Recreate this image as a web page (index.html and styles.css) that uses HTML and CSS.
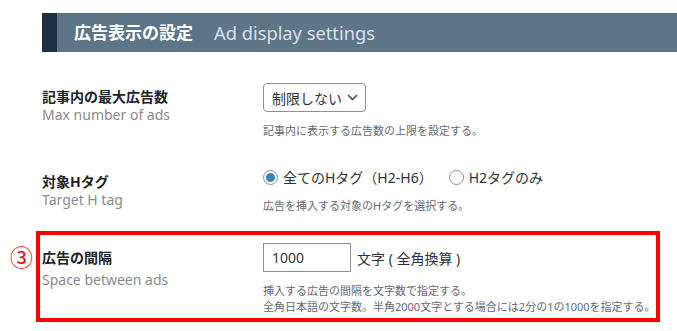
FILE: index.html
```html
<!DOCTYPE html>
<html lang="ja">
<head>
<meta charset="utf-8">
<link rel="stylesheet" href="styles.css">
</head>
<body>
<div class="page">
  <div class="header">
    <span class="h-jp">広告表示の設定</span>
    <span class="h-en">Ad display settings</span>
  </div>

  <div class="row row1">
    <div class="label">
      <div class="jp">記事内の最大広告数</div>
      <div class="en">Max number of ads</div>
    </div>
    <div class="control">
      <div class="select">
        <span>制限しない</span>
        <svg class="chev" width="11" height="7" viewBox="0 0 11 7"><polyline points="1,1 5.5,5.5 10,1" fill="none" stroke="#50575e" stroke-width="1.7"/></svg>
      </div>
      <p class="desc">記事内に表示する広告数の上限を設定する。</p>
    </div>
  </div>

  <div class="row row2">
    <div class="label">
      <div class="jp">対象Hタグ</div>
      <div class="en">Target H tag</div>
    </div>
    <div class="control">
      <div class="radios">
        <span class="radio-item"><span class="radio checked"></span>全てのHタグ（H2-H6）</span>
        <span class="radio-item"><span class="radio"></span>H2タグのみ</span>
      </div>
      <p class="desc desc2">広告を挿入する対象のHタグを選択する。</p>
    </div>
  </div>

  <div class="row row3">
    <span class="badge">③</span>
    <div class="label">
      <div class="jp">広告の間隔</div>
      <div class="en en3">Space between ads</div>
    </div>
    <div class="control">
      <div class="input-line">
        <div class="input">1000</div>
        <span class="unit">文字 ( 全角換算 )</span>
      </div>
      <p class="desc">挿入する広告の間隔を文字数で指定する。<br>全角日本語の文字数。半角2000文字とする場合には2分の1の1000を指定する。</p>
    </div>
  </div>
</div>
</body>
</html>
```

FILE: styles.css
```css
* { box-sizing: border-box; }
html, body { margin: 0; padding: 0; background: #fff; }
body {
  font-family: "Noto Sans", "Noto Sans CJK JP", sans-serif;
  color: #1d2327;
  width: 677px;
  height: 331px;
  overflow: hidden;
}
.page {
  padding-top: 13px;
  padding-left: 42px;
}
.header {
  height: 39px;
  background: #5e7587;
  border-left: 15px solid #1e3044;
  padding-left: 17px;
  display: flex;
  align-items: center;
  line-height: 22px;
}
.h-jp {
  font-size: 17px;
  color: #fff;
  font-weight: 700;
}
.h-en {
  font-size: 18.3px;
  color: #d9e0e6;
  margin-left: 21px;
}
.row {
  display: flex;
  align-items: flex-start;
}
.label {
  width: 221px;
  flex: none;
  padding-top: 4px;
}
.jp {
  font-size: 14px;
  font-weight: 700;
  line-height: 20px;
  color: #1d2327;
}
.en {
  font-size: 14px;
  line-height: 16px;
  color: #8a8a8a;
}
.en3 { margin-top: 4px; }
.control { flex: 1; }
.desc {
  margin: 11px 0 0;
  font-size: 11px;
  line-height: 16px;
  color: #646970;
}
.row1 { margin-top: 31px; }
.select {
  width: 103px;
  height: 29px;
  border: 1px solid #8c8f94;
  border-radius: 4px;
  display: flex;
  align-items: center;
  padding-left: 8px;
  font-size: 14px;
  color: #2c3338;
}
.chev { margin-left: 5px; }
.row2 { margin-top: 29px; }
.radios {
  display: flex;
  height: 18px;
  align-items: center;
  font-size: 14px;
  color: #2c3338;
}
.radio-item {
  display: flex;
  align-items: center;
  margin-right: 16px;
}
.radio {
  width: 15px;
  height: 15px;
  border: 1px solid #8c8f94;
  border-radius: 50%;
  margin-right: 5px;
  display: flex;
  align-items: center;
  justify-content: center;
}
.radio.checked::after {
  content: "";
  width: 9px;
  height: 9px;
  border-radius: 50%;
  background: #3582c4;
}
.desc2 { margin-top: 12px; }
.row3 {
  position: relative;
  margin-top: 17px;
  margin-left: -6px;
  width: 624px;
  border: 4px solid #ff0000;
  padding: 8px 0 3px 2px;
}
.row3 .label { padding-top: 5px; }
.badge {
  position: absolute;
  left: -30px;
  top: 8px;
  font-size: 23px;
  line-height: 26px;
  color: #ff0000;
  font-family: "Noto Sans CJK JP", sans-serif;
}
.input-line {
  display: flex;
  align-items: center;
}
.input {
  width: 88px;
  height: 29px;
  border: 1px solid #8c8f94;
  display: flex;
  align-items: center;
  padding-left: 8px;
  font-size: 14px;
  color: #2c3338;
}
.unit {
  margin-left: 6px;
  font-size: 14px;
  color: #2c3338;
}
```
